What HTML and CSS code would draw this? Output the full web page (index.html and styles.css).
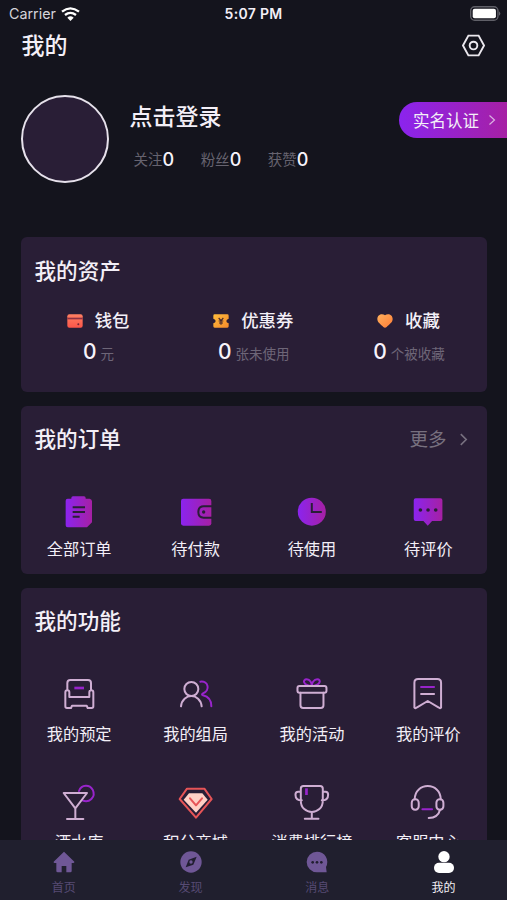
FILE: index.html
```html
<!DOCTYPE html>
<html lang="zh-CN">
<head>
<meta charset="utf-8">
<title>我的</title>
<link rel="stylesheet" href="styles.css">
</head>
<body>
<svg class="defs" aria-hidden="true">
  <defs>
    <linearGradient id="violet"><stop offset="0" stop-color="#8b24ee"/><stop offset="1" stop-color="#a620a4"/></linearGradient>
    <linearGradient id="coral" x2="0" y2="1"><stop offset="0" stop-color="#ff8062"/><stop offset="1" stop-color="#fb5549"/></linearGradient>
    <linearGradient id="amber" x2="1" y2="1"><stop offset="0" stop-color="#ffbd3c"/><stop offset="1" stop-color="#f48a2b"/></linearGradient>
    <linearGradient id="peach" x2="1" y2="1"><stop offset="0" stop-color="#ffb15d"/><stop offset="1" stop-color="#ff7c36"/></linearGradient>
  </defs>
</svg>

<header class="status">
  <div class="carrier">Carrier
    <svg class="wifi" viewBox="0 0 57 42"><path d="M3 14Q28 -6 54 14" /><path d="M12 24Q28 11 45 24"/><path class="dot" d="M19 32Q28 24 38 32L28.500 42Z"/></svg>
  </div>
  <div class="time">5:07 PM</div>
  <svg class="battery" viewBox="0 0 92 44"><rect x="2" y="2" width="81" height="40" rx="12" fill="none" stroke="#606068" stroke-width="4"/><rect x="8" y="8" width="69" height="28" rx="6" fill="#fff"/><path d="M86 15q8 7 0 14z" fill="#606068"/></svg>
</header>

<main class="content">
  <div class="navbar">
    <h1>我的</h1>
    <svg class="gear" viewBox="0 0 72 72"><path d="M20 5H52L69 36L52 67H20L3 36Z"/><circle cx="36" cy="36" r="12"/></svg>
  </div>

  <section class="profile">
    <div class="avatar"></div>
    <div class="info">
      <h2>点击登录</h2>
      <div class="stats"><span>关注<b>0</b></span><span>粉丝<b>0</b></span><span>获赞<b>0</b></span></div>
    </div>
    <div class="verify">实名认证<svg class="chev" viewBox="0 0 8 12"><path d="M1.500 1.500L6.500 6L1.500 10.500"/></svg></div>
  </section>

  <section class="card assets">
    <h3>我的资产</h3>
    <div class="grid3">
      <div class="asset">
        <div class="name"><svg viewBox="0 0 48 42"><rect x="1" y="1" width="46" height="40" rx="6" fill="url(#coral)"/><path d="M1 11H47V16H1Z" fill="#8d3143"/><circle cx="34" cy="31" r="3" fill="#6f2437"/></svg>钱包</div>
        <div class="count"><b>0</b>元</div>
      </div>
      <div class="asset">
        <div class="name"><svg viewBox="0 0 48 42"><path d="M5 1H43Q47 1 47 5V14Q40 16 40 21T47 28V37Q47 41 43 41H5Q1 41 1 37V28Q8 26 8 21T1 14V5Q1 1 5 1Z" fill="url(#amber)"/><path d="M17 12L24 20L31 12M24 20V32M17 21H31M18 27H30" fill="none" stroke="#4a2a2b" stroke-width="3.500"/></svg>优惠券</div>
        <div class="count"><b>0</b>张未使用</div>
      </div>
      <div class="asset">
        <div class="name"><svg viewBox="0 0 48 42"><path d="M24 4C31 -3 47 0 47 15C47 26 36 31 29 39Q24 43 19 39C12 31 1 26 1 15C1 0 17 -3 24 4Z" fill="url(#peach)"/></svg>收藏</div>
        <div class="count"><b>0</b>个被收藏</div>
      </div>
    </div>
  </section>

  <section class="card orders">
    <h3>我的订单<span class="more">更多<svg class="chev" viewBox="0 0 8 12"><path d="M1.500 1L6.500 6L1.500 11"/></svg></span></h3>
    <div class="grid4">
      <div class="item">
        <svg class="icon" viewBox="187 285 102 102"><path fill="url(#violet)" d="M204 296H215V294Q215 289 220 289H253Q258 289 258 294V296H270Q277 298 277 304V367L262 382H204Q198 382 198 376V302Q198 296 204 296Z"/><path class="cut" d="M219 322H256M219 336H256M219 350H240"/></svg>
        全部订单
      </div>
      <div class="item">
        <svg class="icon" viewBox="536 285 102 102"><path fill="url(#violet)" d="M549 296H626Q633 296 633 303V370Q633 377 626 377H549Q542 377 542 370V303Q542 296 549 296Z"/><path class="cut" d="M636 319H610Q594 319 594 336T610 353H636"/><circle cx="610" cy="336" r="5" fill="#291e36"/></svg>
        待付款
      </div>
      <div class="item">
        <svg class="icon" viewBox="123.600 285 102 102"><circle cx="174" cy="335" r="42" fill="url(#violet)"/><path class="cut" d="M174 309V336H204"/></svg>
        待使用
      </div>
      <div class="item">
        <svg class="icon" viewBox="472.800 285 102 102"><path fill="url(#violet)" d="M487 295H561Q567 295 567 301V357Q567 363 561 363H536L523 377L510 363H487Q481 363 481 357V301Q481 295 487 295Z"/><circle cx="501" cy="330" r="5.500" fill="#291e36"/><circle cx="524" cy="330" r="5.500" fill="#291e36"/><circle cx="547" cy="330" r="5.500" fill="#291e36"/></svg>
        待评价
      </div>
    </div>
  </section>

  <section class="card features">
    <h3>我的功能</h3>
    <div class="grid4">
      <div class="item">
        <svg class="icon line" viewBox="187 291 102 102"><path d="M203 331V309Q203 300 212 300H265Q274 300 274 309V331M209 351V337Q209 331 203 331T197 337V379Q197 384 202 384H214L217 377H261L264 384H276Q281 384 281 379V337Q281 331 275 331T269 337V351H209"/><path class="accent flat" d="M224 324H253"/></svg>
        我的预定
      </div>
      <div class="item">
        <svg class="icon line" viewBox="536 291 102 102"><path class="accent" d="M600 305C625 302 630 332 608 340Q602 344 608 346C625 350 633 361 633 379"/><circle cx="573" cy="327" r="21"/><path d="M542 379C546 338 600 338 604 379"/></svg>
        我的组局
      </div>
      <div class="item">
        <svg class="icon line" viewBox="123.600 291 102 102"><path class="accent" d="M174 318C147 316 145 298 159 298C169 298 174 309 174 318C174 309 180 298 190 298C204 298 200 316 174 318"/><rect x="131" y="318" width="87" height="20" rx="6"/><path d="M140 338V376Q140 384 148 384H201Q209 384 209 376V338"/></svg>
        我的活动
      </div>
      <div class="item">
        <svg class="icon line" viewBox="472.800 291 102 102"><path d="M483 308Q483 297 494 297H552Q563 297 563 308V383Q561 387 555 382L523 363L491 382Q485 387 483 383ZM503 342H542"/><path class="accent" d="M503 321H542"/></svg>
        我的评价
      </div>
      <div class="item">
        <svg class="icon line" viewBox="187 102 102 102"><path class="accent" d="M238 120C246 99 270 101 279 116C290 139 268 157 248 148"/><path d="M192 126H262L227 172ZM227 172V204M202 204H251"/></svg>
        酒水库
      </div>
      <div class="item">
        <svg class="icon line" viewBox="536 102 102 102"><path stroke="#e65457" d="M560 113H612L634 144L587 200L538 144Z"/><path fill="#ffd0c5" stroke="none" d="M566 127H606L622 146L587 185L550 146Z"/><path stroke="#e65457" d="M569 142L587 163L605 142"/></svg>
        积分商城
      </div>
      <div class="item">
        <svg class="icon line" viewBox="123.600 102 102 102"><path d="M149 105H199Q207 105 207 113V149C207 194 141 194 141 149V113Q141 105 149 105ZM141 122H133Q125 122 125 131C125 143 130 148 144 148M207 122H215Q223 122 223 131C223 143 218 148 204 148M174 183V201M153 203H194"/><path class="accent flat" d="M158 112V132"/></svg>
        消费排行榜
      </div>
      <div class="item">
        <svg class="icon line" viewBox="472.800 102 102 102"><path d="M484 145C484 92 562 92 562 145M560 176Q554 200 526 201"/><rect x="475" y="145" width="21" height="31" rx="10"/><rect x="549" y="145" width="21" height="31" rx="10"/><path class="accent" d="M507 175H536"/></svg>
        客服中心
      </div>
    </div>
  </section>
</main>

<nav class="tabs">
  <div class="tab">
    <svg viewBox="0 0 66 66"><path d="M33 2L64 32Q65 36 60 36H56V60Q56 64 52 64H40V45H26V64H14Q10 64 10 60V36H5Q1 36 2 32Z"/></svg>首页
  </div>
  <div class="tab">
    <svg viewBox="0 0 66 66"><circle cx="33" cy="33" r="32"/><path fill="#211e30" d="M50 17L40 41L17 49L26 26Z"/><circle cx="33" cy="33" r="5"/></svg>发现
  </div>
  <div class="tab">
    <svg viewBox="0 0 66 66"><path d="M33 2A31 31 0 0 1 60 48L62 64H33A31 31 0 0 1 33 2Z"/><g fill="#211e30"><circle cx="20" cy="34" r="4"/><circle cx="33" cy="34" r="4"/><circle cx="46" cy="34" r="4"/></g></svg>消息
  </div>
  <div class="tab active">
    <svg viewBox="0 0 66 66"><circle cx="33" cy="17" r="17"/><rect x="3" y="35" width="60" height="31" rx="15"/></svg>我的
  </div>
</nav>
</body>
</html>
```
FILE: styles.css
```css
* { box-sizing: border-box; }

body {
  margin: 0;
  height: 900px;
  display: flex;
  flex-direction: column;
  overflow: hidden;
  background: #14141d;
  color: #f3eff7;
  font-family: Inter, "Noto Sans CJK SC", sans-serif;
}

h1, h2, h3 { margin: 0; font-weight: 500; }
b { font-weight: 500; color: #f7f3fb; }
svg { display: block; flex: none; }
.defs { position: absolute; width: 0; height: 0; }

.status {
  height: 27px;
  flex: none;
  display: grid;
  grid-template-columns: 1fr auto 1fr;
  align-items: center;
  padding: 0 6px 0 9px;
  font-size: 14.3px;
}
.carrier { display: flex; align-items: center; gap: 6px; color: #d5d4da; }
.wifi { width: 19px; height: 14px; margin-left: -1px; fill: none; stroke: #fff; stroke-width: 7; }
.wifi .dot { fill: #fff; stroke: none; }
.time { margin-right: 3px; font-weight: 600; font-size: 14px; letter-spacing: .3px; }
.battery { width: 31px; height: 15px; justify-self: end; }

.content { flex: 1; min-height: 0; overflow: hidden; }

.navbar {
  height: 37px;
  display: flex;
  justify-content: space-between;
  align-items: center;
  padding: 0 22px 0 21.5px;
}
.navbar h1 { font-size: 23px; line-height: 36px; }
.gear { width: 23px; height: 23px; fill: none; stroke: #ebe8ee; stroke-width: 6; }

.profile {
  height: 173px;
  display: flex;
  align-items: flex-start;
  padding: 31px 0 0 21px;
}
.avatar {
  width: 88px;
  height: 88px;
  border: 2px solid #e6e1eb;
  border-radius: 50%;
  background: #291e36;
}
.info { margin-left: 20.5px; padding-top: 4px; }
.info h2 { font-size: 23px; line-height: 36px; }
.stats {
  display: flex;
  gap: 26.5px;
  margin: 13px 0 0 4px;
  font-size: 14.5px;
  line-height: 24px;
  color: #66636f;
}
.stats span { display: flex; align-items: center; }
.stats b { font-size: 18px; }
.verify {
  width: 108px;
  height: 36px;
  margin: 7px 0 0 auto;
  padding-left: 14px;
  display: flex;
  align-items: center;
  gap: 9px;
  font-size: 16.5px;
  border-radius: 18px 0 0 18px;
  background: linear-gradient(90deg, #8b24ee, #a620a4);
}
.chev { width: 8px; height: 12px; fill: none; stroke: currentColor; stroke-width: 1.2; opacity: .7; }

.card {
  margin: 0 20.500px 14px 21px;
  border-radius: 6px;
  background: #291e36;
}
.card h3 {
  display: flex;
  justify-content: space-between;
  padding: 0 19px 0 13.500px;
  font-size: 21.6px;
  line-height: 32px;
}
.more { display: flex; align-items: center; gap: 12px; font-size: 18.5px; font-weight: 400; color: #77707f; }
.more .chev { width: 9px; height: 13px; stroke-width: 1.500; opacity: 1; }

.assets { height: 155px; padding-top: 18px; }
.grid3 { display: grid; grid-template-columns: repeat(3, 1fr); margin-top: 21px; }
.asset { display: flex; flex-direction: column; align-items: center; }
.name { display: flex; align-items: center; gap: 12px; margin-left: -1px; font-size: 17.4px; line-height: 26px; font-weight: 500; }
.name svg { width: 16px; height: 14px; }
.count { display: flex; align-items: baseline; gap: 4px; margin-top: 3px; font-size: 13.5px; line-height: 30px; color: #6e6678; }
.count b { font-size: 21px; }

.orders { height: 168px; padding-top: 17px; }
.grid4 { display: grid; grid-template-columns: repeat(4, 116.4px); }
.orders .grid4 { margin-top: 40px; }
.item { display: flex; flex-direction: column; align-items: center; font-size: 16.2px; line-height: 24px; white-space: nowrap; }
.icon { width: 34px; height: 34px; margin-bottom: 8px; overflow: visible; }
.cut { fill: none; stroke: #291e36; stroke-width: 6; }

.features { height: 310px; padding-top: 17px; }
.features .grid4 { margin-top: 40px; row-gap: 39px; }
.features .icon { margin-bottom: 11px; }
.line { fill: none; stroke: #cfaed3; stroke-width: 6; stroke-linecap: round; stroke-linejoin: round; }
.accent { stroke: #9824cb; }
.flat { stroke-width: 8; stroke-linecap: butt; }

.tabs {
  height: 60px;
  flex: none;
  display: grid;
  grid-template-columns: repeat(4, 1fr);
  background: #201f2e;
}
.tab { display: flex; flex-direction: column; align-items: center; padding-top: 11px; font-size: 12px; line-height: 18px; color: #574b74; }
.tab svg { width: 22px; height: 22px; margin-bottom: 6px; fill: #6f5796; }
.tab:not(.active) { padding-left: 1px; }
.tab.active { color: #f2eff6; }
.tab.active svg { fill: #fff; }
```
